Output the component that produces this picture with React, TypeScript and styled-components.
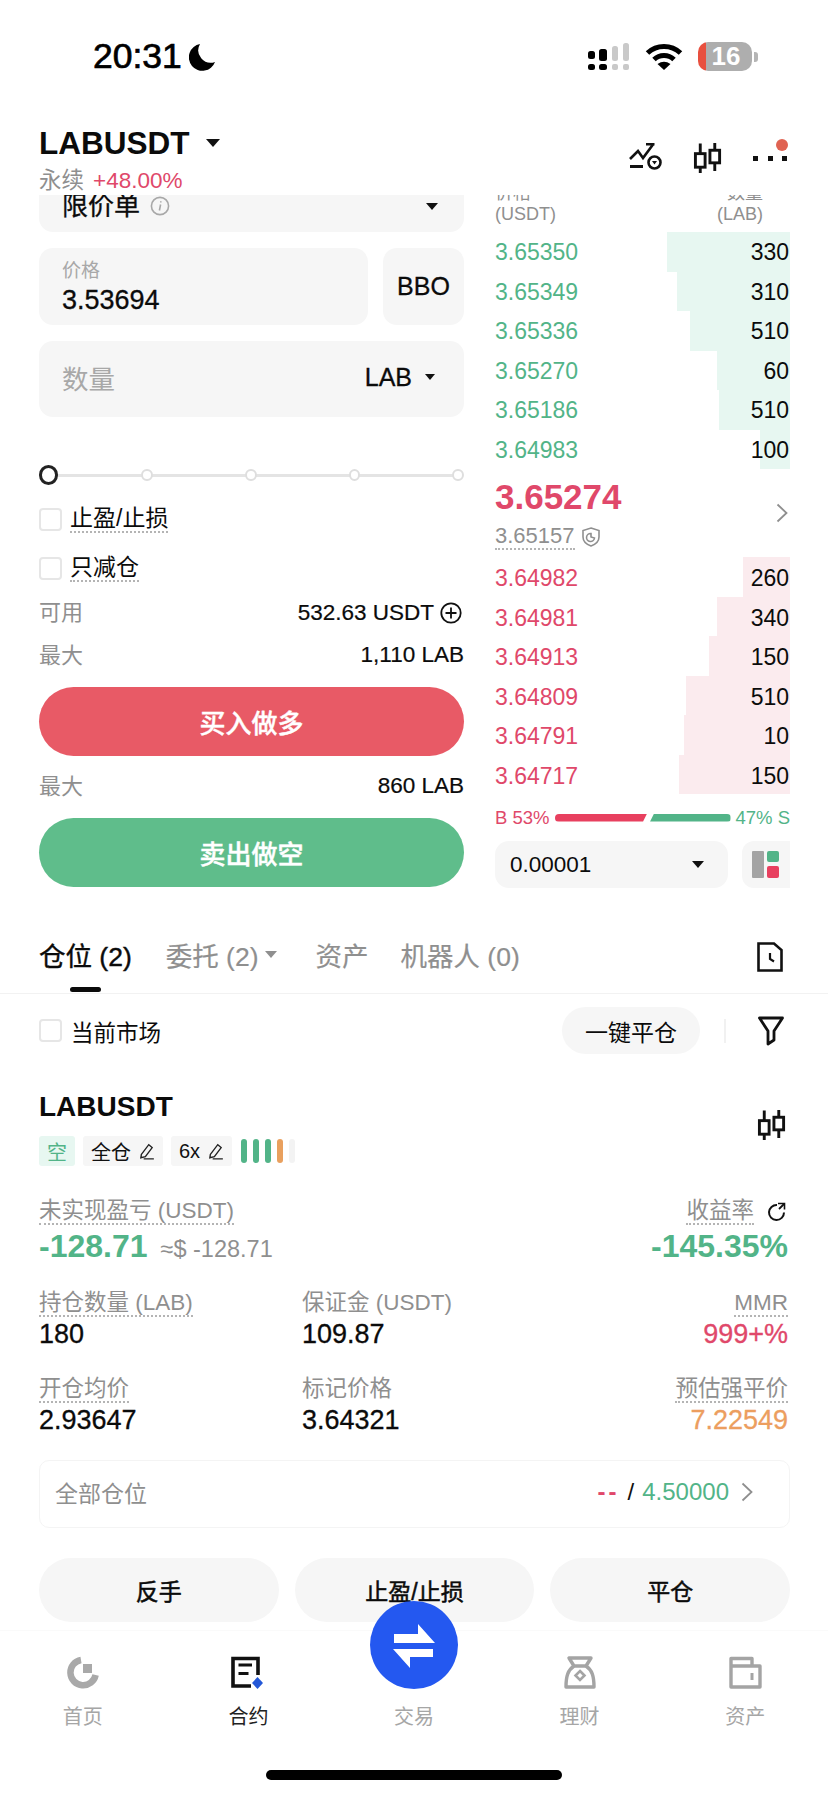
import React from "react";
import styled, { createGlobalStyle } from "styled-components";

const GREEN = "#52b488";
const RED = "#e0486a";
const GRAY = "#8f8f8f";
const FIELD = "#f6f6f6";

const Global = createGlobalStyle`
  html, body { margin: 0; padding: 0; background: #fff; }
  * { box-sizing: border-box; }
  body {
    font-family: "Liberation Sans", "Noto Sans CJK SC", sans-serif;
    color: #0b0b0b;
  }
`;

const Page = styled.div`
  width: 828px;
  height: 1795px;
  display: flex;
  flex-direction: column;
  overflow: hidden;
  background: #fff;
`;

/* status bar */
const StatusBar = styled.div`
  height: 100px;
  padding: 13px 70px 0 93px;
  display: flex;
  align-items: center;
  justify-content: space-between;
  flex: none;
`;
const Clock = styled.div`
  display: flex;
  align-items: center;
  gap: 7px;
  font-size: 35.5px;
  font-weight: 400;
  -webkit-text-stroke: 0.7px #000;
  color: #000;
`;
const StatusIcons = styled.div`
  display: flex;
  align-items: center;
  gap: 15px;
`;
const BatteryWrap = styled.div`
  display: flex;
  align-items: center;
  gap: 2px;
`;
const Battery = styled.div`
  width: 54px;
  height: 29px;
  border-radius: 10px;
  background: linear-gradient(90deg, #e8503f 0 8px, #aeaeae 8px);
  color: #fff;
  font-size: 26px;
  font-weight: 700;
  line-height: 29px;
  text-align: center;
  padding-left: 2px;
`;
const BatteryNub = styled.div`
  width: 4px;
  height: 10px;
  border-radius: 0 3px 3px 0;
  background: #b5b5b5;
`;

/* header */
const Header = styled.div`
  height: 95px;
  flex: none;
  padding: 23px 41px 0 39px;
  display: flex;
  justify-content: space-between;
  background: #fff;
  position: relative;
  z-index: 1;
`;
const Title = styled.div`
  display: flex;
  align-items: center;
  gap: 16px;
  font-size: 31.5px;
  font-weight: 700;
  line-height: 40px;
`;
const SubTitle = styled.div`
  margin-top: 4px;
  display: flex;
  gap: 9px;
  font-size: 22.5px;
  line-height: 28px;
  color: ${GRAY};
`;
const Change = styled.span`
  color: ${RED};
`;
const HeaderIcons = styled.div`
  display: flex;
  align-items: flex-start;
  gap: 30px;
  padding-top: 20px;
`;
const Caret = styled.i<{ $size?: number; $color?: string }>`
  display: inline-block;
  flex: none;
  width: 0;
  height: 0;
  border-left: ${(p) => p.$size ?? 6}px solid transparent;
  border-right: ${(p) => p.$size ?? 6}px solid transparent;
  border-top: ${(p) => (p.$size ?? 6) * 1.25}px solid ${(p) => p.$color ?? "#111"};
`;

/* scrolled body */
const Body = styled.div`
  flex: 1;
  min-height: 0;
  overflow: hidden;
`;
const Trade = styled.div`
  margin-top: -39px;
  padding: 0 38px 0 39px;
  display: grid;
  grid-template-columns: 425px 295px;
  column-gap: 31px;
`;
const OrderForm = styled.div`
  display: flex;
  flex-direction: column;
`;
const Field = styled.div<{ $h?: number; $w?: string }>`
  height: ${(p) => p.$h ?? 76}px;
  width: ${(p) => p.$w ?? "100%"};
  border-radius: 14px;
  background: ${FIELD};
  display: flex;
  align-items: center;
  padding: 0 23px;
`;
const OrderType = styled(Field)`
  justify-content: space-between;
  align-items: flex-end;
  padding-bottom: 10px;
  font-size: 26px;
  line-height: 32px;
  -webkit-text-stroke: 0.3px #0b0b0b;
  padding-right: 26px;
`;
const OrderName = styled.span`
  display: flex;
  align-items: center;
  gap: 10px;
`;
const OrderCaret = styled(Caret)`
  margin-bottom: 12px;
`;
const PriceRow = styled.div`
  margin-top: 16px;
  display: flex;
  gap: 15px;
`;
const PriceField = styled(Field)`
  flex-direction: column;
  align-items: flex-start;
  justify-content: center;
`;
const PriceLabel = styled.div`
  font-size: 19px;
  line-height: 26px;
  color: #a8a8a8;
`;
const PriceValue = styled.div`
  font-size: 27px;
  line-height: 32px;
  -webkit-text-stroke: 0.3px #0b0b0b;
`;
const BboField = styled(Field)`
  flex: none;
  width: 81px;
  padding: 0;
  justify-content: center;
  font-size: 25px;
  -webkit-text-stroke: 0.3px #0b0b0b;
`;
const QtyField = styled(Field)`
  margin-top: 16px;
  justify-content: space-between;
  padding-right: 29px;
  padding-bottom: 4px;
`;
const QtyLabel = styled.span`
  font-size: 26.5px;
  color: #a8a8a8;
`;
const QtyUnit = styled.span`
  display: flex;
  align-items: center;
  gap: 13px;
  font-size: 25px;
  -webkit-text-stroke: 0.3px #0b0b0b;
`;
const Slider = styled.div`
  position: relative;
  margin-top: 44px;
  margin-bottom: 6px;
  height: 28px;
  display: flex;
  align-items: center;
  gap: 92px;
  &::before {
    content: "";
    position: absolute;
    left: 10px;
    right: 4px;
    top: 13px;
    height: 3px;
    background: #e4e4e4;
  }
`;
const SliderThumb = styled.i`
  position: relative;
  width: 20px;
  height: 20px;
  margin-right: -9px;
  border-radius: 50%;
  border: 3px solid #222;
  background: #fff;
`;
const SliderStop = styled.i`
  position: relative;
  width: 12px;
  height: 12px;
  border-radius: 50%;
  border: 2px solid #dedede;
  background: #fff;
`;
const CheckRow = styled.label`
  height: 49px;
  display: flex;
  align-items: center;
  gap: 8px;
  font-size: 23px;
`;
const CheckBox = styled.span`
  width: 23px;
  height: 23px;
  flex: none;
  border: 2px solid #e6e6e6;
  border-radius: 4px;
`;
const Dotted = styled.span<{ $plain?: boolean }>`
  display: inline-block;
  line-height: 1.1;
  border-bottom: 2px dotted ${(p) => (p.$plain ? "transparent" : "#b4b4b4")};
`;
const InfoRow = styled.div<{ $h: number; $pb?: number }>`
  height: ${(p) => p.$h}px;
  padding-bottom: ${(p) => p.$pb ?? 0}px;
  display: flex;
  align-items: center;
  justify-content: space-between;
  font-size: 22.5px;
  -webkit-text-stroke: 0.2px #0b0b0b;
`;
const InfoLabel = styled.span`
  padding-bottom: 2px;
  color: ${GRAY};
  font-size: 22px;
  -webkit-text-stroke: 0;
`;
const InfoValue = styled.span`
  display: flex;
  align-items: center;
  gap: 6px;
  padding-top: 3px;
`;
const PlusSlot = styled.span`
  display: flex;
  margin-right: 2px;
`;
const SideButton = styled.div<{ $bg: string }>`
  height: 69px;
  border-radius: 35px;
  background: ${(p) => p.$bg};
  color: #fff;
  display: flex;
  align-items: center;
  justify-content: center;
  font-size: 26px;
  font-weight: 500;
  -webkit-text-stroke: 0.4px #fff;
`;
const BuyButton = styled(SideButton)`
  margin-top: 9px;
`;

/* order book */
const Book = styled.div`
  display: flex;
  flex-direction: column;
`;
const BookHead = styled.div`
  height: 76px;
  padding-bottom: 7px;
  display: flex;
  justify-content: space-between;
  align-items: flex-end;
  font-size: 18px;
  line-height: 21px;
  color: ${GRAY};
`;
const BookHeadCol = styled.div<{ $right?: boolean }>`
  text-align: ${(p) => (p.$right ? "right" : "left")};
  padding-right: ${(p) => (p.$right ? 27 : 0)}px;
`;
const BookRow = styled.div<{ $shift: number }>`
  position: relative;
  height: 39.5px;
  padding: ${(p) => p.$shift}px 1px 0 0;
  display: flex;
  align-items: center;
  justify-content: space-between;
  font-size: 23px;
`;
const DepthBar = styled.i<{ $bg: string }>`
  position: absolute;
  top: 0;
  right: 0;
  bottom: 0;
  background: ${(p) => p.$bg};
`;
const BookPrice = styled.span<{ $color: string }>`
  position: relative;
  color: ${(p) => p.$color};
`;
const BookQty = styled.span`
  position: relative;
`;
const Mid = styled.div`
  height: 88px;
  display: flex;
  align-items: center;
  justify-content: space-between;
  padding-right: 2px;
`;
const MidPrice = styled.div`
  font-size: 35px;
  font-weight: 700;
  line-height: 42px;
  color: ${RED};
`;
const MarkRow = styled.div`
  margin-top: 6px;
  display: flex;
  align-items: center;
  gap: 7px;
  font-size: 22px;
  color: ${GRAY};
`;
const Ratio = styled.div`
  height: 47px;
  display: flex;
  align-items: center;
  justify-content: space-between;
  font-size: 18.5px;
`;
const RatioBars = styled.div`
  display: flex;
  gap: 3px;
  width: 176px;
`;
const RatioBar = styled.i<{ $bg: string; $left?: boolean }>`
  height: 8px;
  background: ${(p) => p.$bg};
  flex: ${(p) => (p.$left ? 92 : 80)} 0 0;
  clip-path: ${(p) =>
    p.$left
      ? "polygon(0 0, 100% 0, calc(100% - 4px) 100%, 0 100%)"
      : "polygon(4px 0, 100% 0, 100% 100%, 0 100%)"};
  border-radius: ${(p) => (p.$left ? "4px 0 0 4px" : "0 4px 4px 0")};
`;
const RatioText = styled.span<{ $color: string }>`
  color: ${(p) => p.$color};
`;
const BookFoot = styled.div`
  display: flex;
  gap: 14px;
`;
const TickField = styled(Field)`
  flex: 1;
  height: 47px;
  padding: 0 24px 0 15px;
  justify-content: space-between;
  font-size: 22.5px;
`;
const LayoutButton = styled.div`
  width: 48px;
  height: 47px;
  border-radius: 12px 0 0 12px;
  background: ${FIELD};
  display: flex;
  align-items: center;
  justify-content: center;
`;

/* positions */
const Tabs = styled.div`
  height: 106px;
  padding: 49px 45px 0 39px;
  display: flex;
  align-items: flex-start;
  border-bottom: 1px solid #f2f2f2;
`;
const Tab = styled.div<{ $active?: boolean; $gap?: number }>`
  position: relative;
  height: 34px;
  display: flex;
  align-items: center;
  gap: 6px;
  margin-right: ${(p) => p.$gap ?? 34}px;
  font-size: 26.5px;
  color: ${(p) => (p.$active ? "#0b0b0b" : GRAY)};
  -webkit-text-stroke: ${(p) => (p.$active ? "0.4px #0b0b0b" : "0.2px #8f8f8f")};
`;
const TabMark = styled.i`
  position: absolute;
  left: 31px;
  bottom: -21px;
  width: 31px;
  height: 5px;
  border-radius: 3px;
  background: #0b0b0b;
`;
const TabIcon = styled.div`
  margin-left: auto;
  margin-top: 5px;
`;
const Section = styled.div`
  padding: 0 38px 0 39px;
`;
const FilterRow = styled.div`
  height: 78px;
  padding-bottom: 5px;
  display: flex;
  align-items: center;
`;
const FilterCheck = styled.label`
  flex: 1;
  display: flex;
  align-items: center;
  gap: 9px;
  font-size: 22.5px;
`;
const Chip = styled.div`
  width: 138px;
  height: 47px;
  border-radius: 24px;
  background: ${FIELD};
  display: flex;
  align-items: center;
  justify-content: center;
  font-size: 23px;
`;
const VRule = styled.i`
  width: 2px;
  height: 24px;
  margin: 0 32px 0 24px;
  background: #f1f1f1;
`;
const FilterIcon = styled.div`
  margin-right: 6px;
  display: flex;
`;
const PosHead = styled.div`
  margin-top: 15px;
  display: flex;
  justify-content: space-between;
  align-items: flex-end;
`;
const PosTitle = styled.div`
  font-size: 28px;
  font-weight: 700;
  line-height: 40px;
`;
const TagRow = styled.div`
  margin-top: 9px;
  display: flex;
  align-items: center;
  gap: 8px;
`;
const Tag = styled.div<{ $bg?: string; $color?: string }>`
  height: 30px;
  padding: 0 8px;
  border-radius: 3px;
  display: flex;
  align-items: center;
  gap: 7px;
  font-size: 20px;
  background: ${(p) => p.$bg ?? "#f6f6f6"};
  color: ${(p) => p.$color ?? "#111"};
`;
const RiskBars = styled.div`
  display: flex;
  gap: 6px;
  margin-left: 1px;
`;
const RiskBar = styled.i<{ $color: string }>`
  width: 6px;
  height: 24px;
  border-radius: 3px;
  background: ${(p) => p.$color};
`;
const PosIcon = styled.div`
  margin: 0 3px 26px 0;
  display: flex;
`;
const Metrics = styled.div`
  margin-top: 31px;
  padding-right: 2px;
  display: grid;
  grid-template-columns: 263px 1fr auto;
`;
const Metric = styled.div<{ $right?: boolean; $wide?: boolean; $top?: number }>`
  grid-column: ${(p) => (p.$wide ? "span 2" : "auto")};
  text-align: ${(p) => (p.$right ? "right" : "left")};
  margin-top: ${(p) => p.$top ?? 0}px;
`;
const MetricLabel = styled.div`
  height: 30px;
  display: flex;
  align-items: center;
  gap: 11px;
  font-size: 22.5px;
  color: ${GRAY};
`;
const MetricLabelEnd = styled(MetricLabel)`
  justify-content: flex-end;
`;
const ShareSlot = styled.span`
  display: flex;
  margin: 0 2px 0 2px;
`;
const MetricValue = styled.div<{ $color?: string }>`
  font-size: 27px;
  line-height: 31px;
  color: ${(p) => p.$color ?? "#0b0b0b"};
  -webkit-text-stroke: 0.3px ${(p) => p.$color ?? "#0b0b0b"};
`;
const BigValue = styled.div`
  display: flex;
  align-items: baseline;
  gap: 13px;
  font-size: 32px;
  font-weight: 700;
  line-height: 38px;
  color: ${GREEN};
`;
const BigValueEnd = styled(BigValue)`
  justify-content: flex-end;
`;
const FiatValue = styled.span`
  font-size: 23.5px;
  font-weight: 400;
  color: ${GRAY};
`;
const AllBox = styled.div`
  margin-top: 24px;
  height: 68px;
  padding: 0 36px 4px 15px;
  display: flex;
  align-items: center;
  justify-content: space-between;
  border: 1px solid #f4f4f4;
  border-radius: 10px;
  font-size: 23px;
  color: ${GRAY};
`;
const AllValues = styled.div`
  display: flex;
  align-items: center;
  gap: 8px;
  font-size: 24px;
`;
const Dashes = styled.span`
  color: ${RED};
  font-weight: 700;
  letter-spacing: 3px;
`;
const Slash = styled.span`
  color: #111;
`;
const LimitValue = styled.span`
  color: ${GREEN};
  margin-right: 4px;
`;
const Actions = styled.div`
  margin-top: 30px;
  display: grid;
  grid-template-columns: repeat(3, 1fr);
  gap: 16px;
`;
const ActionButton = styled.div`
  height: 64px;
  border-radius: 32px;
  background: ${FIELD};
  display: flex;
  align-items: center;
  justify-content: center;
  font-size: 23px;
  -webkit-text-stroke: 0.5px #0b0b0b;
`;

/* bottom nav */
const BottomNav = styled.div`
  position: relative;
  height: 165px;
  flex: none;
  padding-top: 25px;
  border-top: 1px solid #fafafa;
  background: #fff;
`;
const NavItems = styled.div`
  display: grid;
  grid-template-columns: repeat(5, 1fr);
`;
const NavItem = styled.div<{ $active?: boolean }>`
  display: flex;
  flex-direction: column;
  align-items: center;
  font-size: 20px;
  color: ${(p) => (p.$active ? "#222" : "#a6a6a6")};
`;
const NavIcon = styled.div`
  height: 34px;
  display: flex;
`;
const NavLabel = styled.div`
  margin-top: 15px;
  line-height: 24px;
`;
const SwapButton = styled.div`
  position: absolute;
  left: 370px;
  top: -30px;
  width: 88px;
  height: 88px;
  border-radius: 50%;
  background: #2458f0;
  display: flex;
`;
const HomeBar = styled.div`
  width: 296px;
  height: 10px;
  margin: 41px auto 0;
  border-radius: 5px;
  background: #000;
`;

/* drawings */
const Moon = () => (
  <svg width="27" height="28" viewBox="0 0 27 28">
    <path d="M11 1 A13.5 13.5 0 1 0 26 19 A12.5 12.5 0 0 1 11 1 Z" fill="#000" />
  </svg>
);
const Signal = () => (
  <svg width="42" height="28" viewBox="0 0 42 28">
    <rect x="0" y="8" width="7" height="8" rx="2.5" fill="#000" />
    <rect x="11" y="6" width="8" height="12" rx="2.5" fill="#000" />
    <rect x="24" y="3" width="6" height="15" rx="2.5" fill="#c9c9c9" />
    <rect x="35" y="0" width="6" height="18" rx="2.5" fill="#c9c9c9" />
    <rect x="0" y="21" width="7" height="6" rx="2.5" fill="#000" />
    <rect x="11" y="21" width="8" height="6" rx="2.5" fill="#000" />
    <rect x="24" y="21" width="6" height="6" rx="2" fill="#c9c9c9" />
    <rect x="35" y="21" width="6" height="6" rx="2" fill="#c9c9c9" />
  </svg>
);
const Wifi = () => (
  <svg width="38" height="27" viewBox="0 0 38 27">
    <path d="M2.5 10 A24 24 0 0 1 35.5 10" fill="none" stroke="#000" strokeWidth="5" />
    <path d="M9 16.5 A14.5 14.5 0 0 1 29 16.5" fill="none" stroke="#000" strokeWidth="5" />
    <path d="M12.5 21 Q19 16.5 25.5 21 L19 27 Z" fill="#000" />
  </svg>
);
const PriceAlert = () => (
  <svg width="34" height="28" viewBox="0 0 34 28" fill="none" stroke="#111" strokeWidth="2.6">
    <path d="M1 16 L9 8 L14 15 L24 1.5 M17 1.3 H25.5" />
    <path d="M1 23.5 H14" strokeWidth="3" />
    <circle cx="25.5" cy="19.5" r="6" />
    <path d="M23 18 H28 L25.5 21.5 Z" fill="#111" stroke="none" />
  </svg>
);
const Candles = () => (
  <svg width="30" height="30" viewBox="0 0 30 31" fill="none" stroke="#111" strokeWidth="3">
    <path d="M7 0.5 V11 M7 25 V31 M22 0 V7.5 M22 20.5 V29" />
    <rect x="2" y="11" width="10" height="14" />
    <rect x="17" y="7.5" width="10" height="13" />
  </svg>
);
const MoreDots = () => (
  <svg width="34" height="24" viewBox="0 0 34 24" overflow="visible">
    <rect x="0" y="13" width="5" height="5" fill="#111" />
    <rect x="15" y="13" width="5" height="5" fill="#111" />
    <rect x="29" y="13" width="5" height="5" fill="#111" />
    <circle cx="29" cy="2" r="6" fill="#e06352" />
  </svg>
);
const InfoCircle = () => (
  <svg width="20" height="20" viewBox="0 0 20 20" fill="none" stroke="#a8a8a8" strokeWidth="1.6">
    <circle cx="10" cy="10" r="8.6" />
    <path d="M10.6 8.5 L9.4 14.5 M10.8 5.2 V6.4" />
  </svg>
);
const PlusCircle = () => (
  <svg width="22" height="22" viewBox="0 0 22 22" fill="none" stroke="#111" strokeWidth="1.8">
    <circle cx="11" cy="11" r="9.7" />
    <path d="M11 5.5 V16.5 M5.5 11 H16.5" />
  </svg>
);
const Chevron = () => (
  <svg width="12" height="20" viewBox="0 0 12 20" fill="none" stroke="#8f8f8f" strokeWidth="1.8">
    <path d="M1.5 1.5 L10.5 10 L1.5 18.5" />
  </svg>
);
const Shield = () => (
  <svg width="18" height="20" viewBox="0 0 18 20" fill="none" stroke="#8f8f8f" strokeWidth="1.6">
    <path d="M9 1 L17 3.5 V10 C17 14.5 13 17.5 9 19 C5 17.5 1 14.5 1 10 V3.5 Z" />
    <path d="M12.5 11 A4 4 0 1 1 9 6.5 V10 Z" />
  </svg>
);
const LayoutIcon = () => (
  <svg width="28" height="27" viewBox="0 0 28 27">
    <rect x="0" y="0" width="12" height="27" rx="1" fill="#a4a4a4" />
    <rect x="15" y="0" width="12" height="11" rx="2" fill="#52b488" />
    <rect x="15" y="15" width="12" height="12" rx="2" fill="#e8405f" />
  </svg>
);
const FileClock = () => (
  <svg width="26" height="30" viewBox="0 0 26 30" fill="none" stroke="#111" strokeWidth="2.6">
    <path d="M1.5 1.5 H17 L24.5 8 V28.5 H1.5 Z" />
    <path d="M13 11 V17 L17 19.5" strokeWidth="2.2" />
  </svg>
);
const Funnel = () => (
  <svg width="26" height="30" viewBox="0 0 26 30" fill="none" stroke="#111" strokeWidth="2.8">
    <path d="M1.5 2 H24.5 L16 15 V24 L10 28 V15 Z" strokeLinejoin="round" />
  </svg>
);
const Pen = () => (
  <svg width="17" height="17" viewBox="0 0 15 15" fill="none" stroke="#222" strokeWidth="1.2">
    <path d="M3 10 L9.5 1.5 L12.5 4 L6.5 12 L2.5 13 Z M5 14 H14" />
  </svg>
);
const Share = () => (
  <svg width="19" height="20" viewBox="0 0 19 20" fill="none" stroke="#111" strokeWidth="2">
    <path d="M10 3 A7.5 7.5 0 1 0 17 10.5" />
    <path d="M11 1.5 H17.5 V7.5" strokeWidth="1.6" />
    <path d="M17 2 L12 7" strokeWidth="1.8" />
  </svg>
);
const HomeIcon = () => (
  <svg width="32" height="34" viewBox="0 0 32 34" fill="none">
    <path d="M14 4 A12.7 12.7 0 1 0 28.6 19" stroke="#a9a9a9" strokeWidth="6.5" />
    <rect x="16" y="8" width="9" height="9" fill="#a9a9a9" />
  </svg>
);
const ContractIcon = () => (
  <svg width="34" height="34" viewBox="0 0 34 34" fill="none" stroke="#111" strokeWidth="3.6">
    <path d="M27 19 V2.5 H2 V30 H20" />
    <path d="M7.5 9 H21 M7.5 17.5 H17.5" strokeWidth="3" />
    <path d="M26.5 21 L32 27 L26.5 33 L21 27 Z" fill="#2458d8" stroke="none" />
  </svg>
);
const PurseIcon = () => (
  <svg width="32" height="34" viewBox="0 0 32 34" fill="none" stroke="#a4a4a4" strokeWidth="3.4">
    <path d="M5 2 H27 L22 10 H10 Z" strokeLinejoin="round" />
    <path d="M10 10 C4 14 2 20 2 31 H30 C30 20 28 14 22 10" strokeLinejoin="round" />
    <path d="M16 15 L20.5 19.5 L16 24 L11.5 19.5 Z" strokeWidth="2.6" />
  </svg>
);
const WalletIcon = () => (
  <svg width="33" height="34" viewBox="0 0 33 34" fill="none" stroke="#a4a4a4" strokeWidth="3.4">
    <path d="M2 2.5 H23 V10 H31 V31 H2 Z M2 10 H23" strokeLinejoin="round" />
    <path d="M23 17 V24" strokeWidth="3" />
  </svg>
);
const SwapIcon = () => (
  <svg width="88" height="88" viewBox="0 0 88 88" fill="#fff">
    <path d="M24 42 H65 L48 23 V33 H24 Z" />
    <path d="M63 48 H23 L40 67 V56 H63 Z" />
  </svg>
);

const asks = [
  ["3.65350", "330", 123],
  ["3.65349", "310", 113],
  ["3.65336", "510", 100],
  ["3.65270", "60", 73],
  ["3.65186", "510", 71],
  ["3.64983", "100", 30],
] as const;
const bids = [
  ["3.64982", "260", 47],
  ["3.64981", "340", 73],
  ["3.64913", "150", 81],
  ["3.64809", "510", 104],
  ["3.64791", "10", 106],
  ["3.64717", "150", 111],
] as const;

export default function App() {
  return (
    <Page>
      <Global />
      <StatusBar>
        <Clock>
          20:31
          <Moon />
        </Clock>
        <StatusIcons>
          <Signal />
          <Wifi />
          <BatteryWrap>
            <Battery>16</Battery>
            <BatteryNub />
          </BatteryWrap>
        </StatusIcons>
      </StatusBar>

      <Header>
        <div>
          <Title>
            LABUSDT
            <Caret $size={7} />
          </Title>
          <SubTitle>
            永续
            <Change>+48.00%</Change>
          </SubTitle>
        </div>
        <HeaderIcons>
          <PriceAlert />
          <Candles />
          <MoreDots />
        </HeaderIcons>
      </Header>

      <Body>
        <Trade>
          <OrderForm>
            <OrderType>
              <OrderName>
                限价单
                <InfoCircle />
              </OrderName>
              <OrderCaret />
            </OrderType>
            <PriceRow>
              <PriceField $h={77}>
                <PriceLabel>价格</PriceLabel>
                <PriceValue>3.53694</PriceValue>
              </PriceField>
              <BboField $h={77}>BBO</BboField>
            </PriceRow>
            <QtyField>
              <QtyLabel>数量</QtyLabel>
              <QtyUnit>
                LAB
                <Caret $size={5} />
              </QtyUnit>
            </QtyField>
            <Slider>
              <SliderThumb />
              <SliderStop />
              <SliderStop />
              <SliderStop />
              <SliderStop />
            </Slider>
            <CheckRow>
              <CheckBox />
              <Dotted>止盈/止损</Dotted>
            </CheckRow>
            <CheckRow>
              <CheckBox />
              <Dotted>只减仓</Dotted>
            </CheckRow>
            <InfoRow $h={36}>
              <InfoLabel>可用</InfoLabel>
              <InfoValue>
                532.63 USDT
                <PlusSlot>
                  <PlusCircle />
                </PlusSlot>
              </InfoValue>
            </InfoRow>
            <InfoRow $h={49}>
              <InfoLabel>最大</InfoLabel>
              <InfoValue>1,110 LAB</InfoValue>
            </InfoRow>
            <BuyButton $bg="#e85a66">买入做多</BuyButton>
            <InfoRow $h={62} $pb={5}>
              <InfoLabel>最大</InfoLabel>
              <InfoValue>860 LAB</InfoValue>
            </InfoRow>
            <SideButton $bg="#5fbd8b">卖出做空</SideButton>
          </OrderForm>

          <Book>
            <BookHead>
              <BookHeadCol>
                价格
                <br />
                (USDT)
              </BookHeadCol>
              <BookHeadCol $right>
                数量
                <br />
                (LAB)
              </BookHeadCol>
            </BookHead>
            {asks.map(([price, qty, depth]) => (
              <BookRow key={price} $shift={2}>
                <DepthBar $bg="#e7f7f1" style={{ width: depth }} />
                <BookPrice $color={GREEN}>{price}</BookPrice>
                <BookQty>{qty}</BookQty>
              </BookRow>
            ))}
            <Mid>
              <div>
                <MidPrice>3.65274</MidPrice>
                <MarkRow>
                  <Dotted>3.65157</Dotted>
                  <Shield />
                </MarkRow>
              </div>
              <Chevron />
            </Mid>
            {bids.map(([price, qty, depth]) => (
              <BookRow key={price} $shift={4}>
                <DepthBar $bg="#fbebee" style={{ width: depth }} />
                <BookPrice $color={RED}>{price}</BookPrice>
                <BookQty>{qty}</BookQty>
              </BookRow>
            ))}
            <Ratio>
              <RatioText $color={RED}>B 53%</RatioText>
              <RatioBars>
                <RatioBar $bg="#e8405f" $left />
                <RatioBar $bg="#52b488" />
              </RatioBars>
              <RatioText $color={GREEN}>47% S</RatioText>
            </Ratio>
            <BookFoot>
              <TickField>
                0.00001
                <Caret $size={6} />
              </TickField>
              <LayoutButton>
                <LayoutIcon />
              </LayoutButton>
            </BookFoot>
          </Book>
        </Trade>

        <Tabs>
          <Tab $active>
            仓位 (2)
            <TabMark />
          </Tab>
          <Tab $gap={39}>
            委托 (2)
            <Caret $size={6} $color="#8f8f8f" />
          </Tab>
          <Tab $gap={32}>资产</Tab>
          <Tab>机器人 (0)</Tab>
          <TabIcon>
            <FileClock />
          </TabIcon>
        </Tabs>

        <Section>
          <FilterRow>
            <FilterCheck>
              <CheckBox />
              当前市场
            </FilterCheck>
            <Chip>一键平仓</Chip>
            <VRule />
            <FilterIcon>
              <Funnel />
            </FilterIcon>
          </FilterRow>

          <PosHead>
            <div>
              <PosTitle>LABUSDT</PosTitle>
              <TagRow>
                <Tag $bg="#e7f7f1" $color="#52b488">
                  空
                </Tag>
                <Tag>
                  全仓
                  <Pen />
                </Tag>
                <Tag>
                  6x
                  <Pen />
                </Tag>
                <RiskBars>
                  <RiskBar $color="#52b488" />
                  <RiskBar $color="#52b488" />
                  <RiskBar $color="#52b488" />
                  <RiskBar $color="#e9a05e" />
                  <RiskBar $color="#f3f3f3" />
                </RiskBars>
              </TagRow>
            </div>
            <PosIcon>
              <Candles />
            </PosIcon>
          </PosHead>

          <Metrics>
            <Metric $wide>
              <MetricLabel>
                <Dotted>未实现盈亏 (USDT)</Dotted>
              </MetricLabel>
              <BigValue>
                -128.71
                <FiatValue>≈$ -128.71</FiatValue>
              </BigValue>
            </Metric>
            <Metric $right>
              <MetricLabelEnd>
                <Dotted>收益率</Dotted>
                <ShareSlot>
                  <Share />
                </ShareSlot>
              </MetricLabelEnd>
              <BigValueEnd>-145.35%</BigValueEnd>
            </Metric>

            <Metric $top={21}>
              <MetricLabel>
                <Dotted>持仓数量 (LAB)</Dotted>
              </MetricLabel>
              <MetricValue>180</MetricValue>
            </Metric>
            <Metric $top={21}>
              <MetricLabel>
                <Dotted $plain>保证金 (USDT)</Dotted>
              </MetricLabel>
              <MetricValue>109.87</MetricValue>
            </Metric>
            <Metric $right $top={21}>
              <MetricLabelEnd>
                <Dotted>MMR</Dotted>
              </MetricLabelEnd>
              <MetricValue $color={RED}>999+%</MetricValue>
            </Metric>

            <Metric $top={25}>
              <MetricLabel>
                <Dotted>开仓均价</Dotted>
              </MetricLabel>
              <MetricValue>2.93647</MetricValue>
            </Metric>
            <Metric $top={25}>
              <MetricLabel>
                <Dotted $plain>标记价格</Dotted>
              </MetricLabel>
              <MetricValue>3.64321</MetricValue>
            </Metric>
            <Metric $right $top={25}>
              <MetricLabelEnd>
                <Dotted>预估强平价</Dotted>
              </MetricLabelEnd>
              <MetricValue $color="#ec9e5f">7.22549</MetricValue>
            </Metric>
          </Metrics>

          <AllBox>
            全部仓位
            <AllValues>
              <Dashes>--</Dashes>
              <Slash>/</Slash>
              <LimitValue>4.50000</LimitValue>
              <Chevron />
            </AllValues>
          </AllBox>

          <Actions>
            <ActionButton>反手</ActionButton>
            <ActionButton>止盈/止损</ActionButton>
            <ActionButton>平仓</ActionButton>
          </Actions>
        </Section>
      </Body>

      <BottomNav>
        <SwapButton>
          <SwapIcon />
        </SwapButton>
        <NavItems>
          <NavItem>
            <NavIcon>
              <HomeIcon />
            </NavIcon>
            <NavLabel>首页</NavLabel>
          </NavItem>
          <NavItem $active>
            <NavIcon>
              <ContractIcon />
            </NavIcon>
            <NavLabel>合约</NavLabel>
          </NavItem>
          <NavItem>
            <NavIcon />
            <NavLabel>交易</NavLabel>
          </NavItem>
          <NavItem>
            <NavIcon>
              <PurseIcon />
            </NavIcon>
            <NavLabel>理财</NavLabel>
          </NavItem>
          <NavItem>
            <NavIcon>
              <WalletIcon />
            </NavIcon>
            <NavLabel>资产</NavLabel>
          </NavItem>
        </NavItems>
        <HomeBar />
      </BottomNav>
    </Page>
  );
}
